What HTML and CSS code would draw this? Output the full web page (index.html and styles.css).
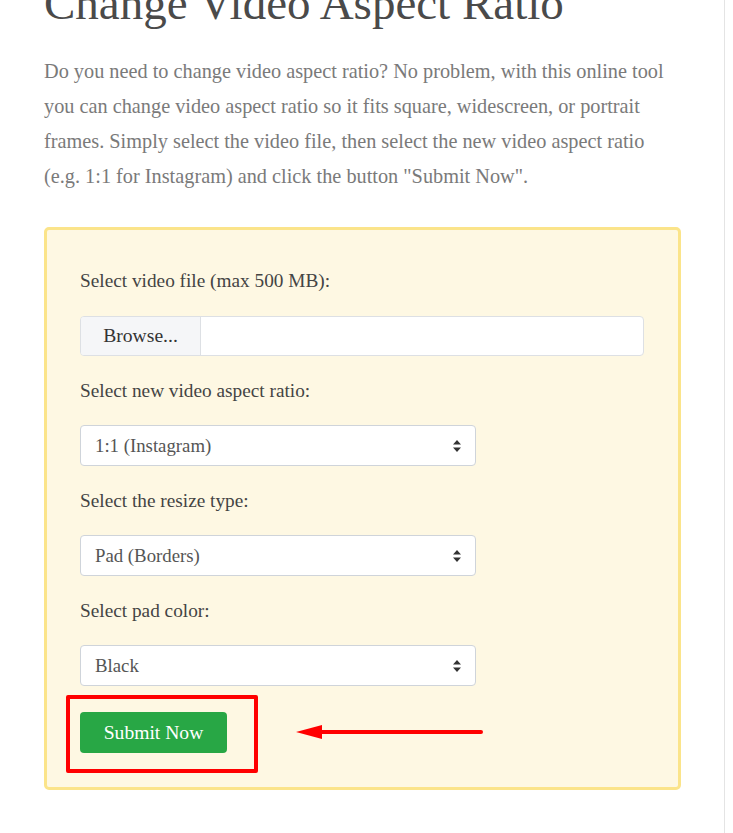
FILE: index.html
```html
<!DOCTYPE html>
<html lang="en">
<head>
<meta charset="utf-8">
<title>Change Video Aspect Ratio</title>
<link rel="stylesheet" href="styles.css">
</head>
<body>
<div class="page">
  <main class="content">
    <h1 class="title">Change Video Aspect Ratio</h1>
    <p class="intro">Do you need to change video aspect ratio? No problem, with this online tool you can change video aspect ratio so it fits square, widescreen, or portrait frames. Simply select the video file, then select the new video aspect ratio (e.g. 1:1 for Instagram) and click the button "Submit Now".</p>
    <form class="tool">
      <label class="label">Select video file (max 500 MB):</label>
      <div class="file">
        <span class="file-btn">Browse...</span>
        <span class="file-name"></span>
      </div>
      <label class="label">Select new video aspect ratio:</label>
      <div class="select-wrap">
        <select class="select"><option>1:1 (Instagram)</option></select>
        <svg class="caret" width="10" height="14" viewBox="0 0 10 14"><path d="M5 1 L9 5.5 H1 Z M5 13 L9 8.5 H1 Z" fill="#333"/></svg>
      </div>
      <label class="label">Select the resize type:</label>
      <div class="select-wrap">
        <select class="select"><option>Pad (Borders)</option></select>
        <svg class="caret" width="10" height="14" viewBox="0 0 10 14"><path d="M5 1 L9 5.5 H1 Z M5 13 L9 8.5 H1 Z" fill="#333"/></svg>
      </div>
      <label class="label">Select pad color:</label>
      <div class="select-wrap">
        <select class="select"><option>Black</option></select>
        <svg class="caret" width="10" height="14" viewBox="0 0 10 14"><path d="M5 1 L9 5.5 H1 Z M5 13 L9 8.5 H1 Z" fill="#333"/></svg>
      </div>
      <div class="submit-row">
        <button type="button" class="submit">Submit Now</button>
        <span class="highlight"></span>
        <svg class="arrow" width="190" height="20" viewBox="0 0 190 20"><path d="M24 8 H185 a2 2 0 0 1 0 4 H24 Z" fill="#f00"/><path d="M0 10 L26 3 V17 Z" fill="#f00"/></svg>
      </div>
    </form>
  </main>
</div>
</body>
</html>
```
FILE: styles.css
```css
html, body {
  margin: 0;
  padding: 0;
  background: #fff;
}
body {
  font-family: "Liberation Serif", "Times New Roman", serif;
  overflow: hidden;
}
.page {
  width: 725px;
  height: 833px;
  border-right: 1px solid #e4e4e4;
  box-sizing: border-box;
  overflow: hidden;
}
.content {
  padding-left: 44px;
  width: 637px;
}
.title {
  font-weight: 400;
  font-size: 47px;
  line-height: 56px;
  color: #4a4a4a;
  margin: -25px 0 0 0;
}
.intro {
  font-size: 20.3px;
  line-height: 35px;
  color: #7a7a7a;
  margin: 23px 0 33px 0;
}
.tool {
  display: flex;
  flex-direction: column;
  align-items: flex-start;
  background: #fef8e3;
  border: 3px solid #fbe48a;
  border-radius: 5px;
  padding: 39px 34px 34px 33px;
}
.label {
  font-size: 19.3px;
  line-height: 24px;
  color: #444;
  margin-bottom: 22px;
}
.file {
  display: flex;
  width: 564px;
  height: 40px;
  box-sizing: border-box;
  border: 1px solid #dde0e4;
  border-radius: 4px;
  background: #fff;
  overflow: hidden;
  margin-top: 1px;
  margin-bottom: 23px;
}
.file-btn {
  width: 120px;
  box-sizing: border-box;
  background: #f5f6f8;
  border-right: 1px solid #dde0e4;
  font-size: 19.6px;
  color: #333;
  display: flex;
  align-items: center;
  justify-content: center;
}
.select-wrap {
  position: relative;
  width: 396px;
  margin-bottom: 23px;
}
.select {
  appearance: none;
  -webkit-appearance: none;
  display: block;
  width: 100%;
  height: 41px;
  box-sizing: border-box;
  border: 1px solid #cfd4da;
  border-radius: 4px;
  background: #fff;
  padding: 0 14px;
  font-family: "Liberation Serif", "Times New Roman", serif;
  font-size: 18.8px;
  color: #555;
}
.caret {
  position: absolute;
  right: 14px;
  top: 14px;
}
.submit-row {
  position: relative;
  margin-top: 3px;
}
.submit {
  display: block;
  width: 147px;
  height: 41px;
  border: none;
  border-radius: 4px;
  background: #28a745;
  color: #fff;
  font-family: "Liberation Serif", "Times New Roman", serif;
  font-size: 19.6px;
  cursor: pointer;
}
.highlight {
  position: absolute;
  left: -14px;
  top: -17px;
  width: 192px;
  height: 78px;
  box-sizing: border-box;
  border: 4px solid #f00;
  border-radius: 2px;
}
.arrow {
  position: absolute;
  left: 216px;
  top: 10px;
}
```
